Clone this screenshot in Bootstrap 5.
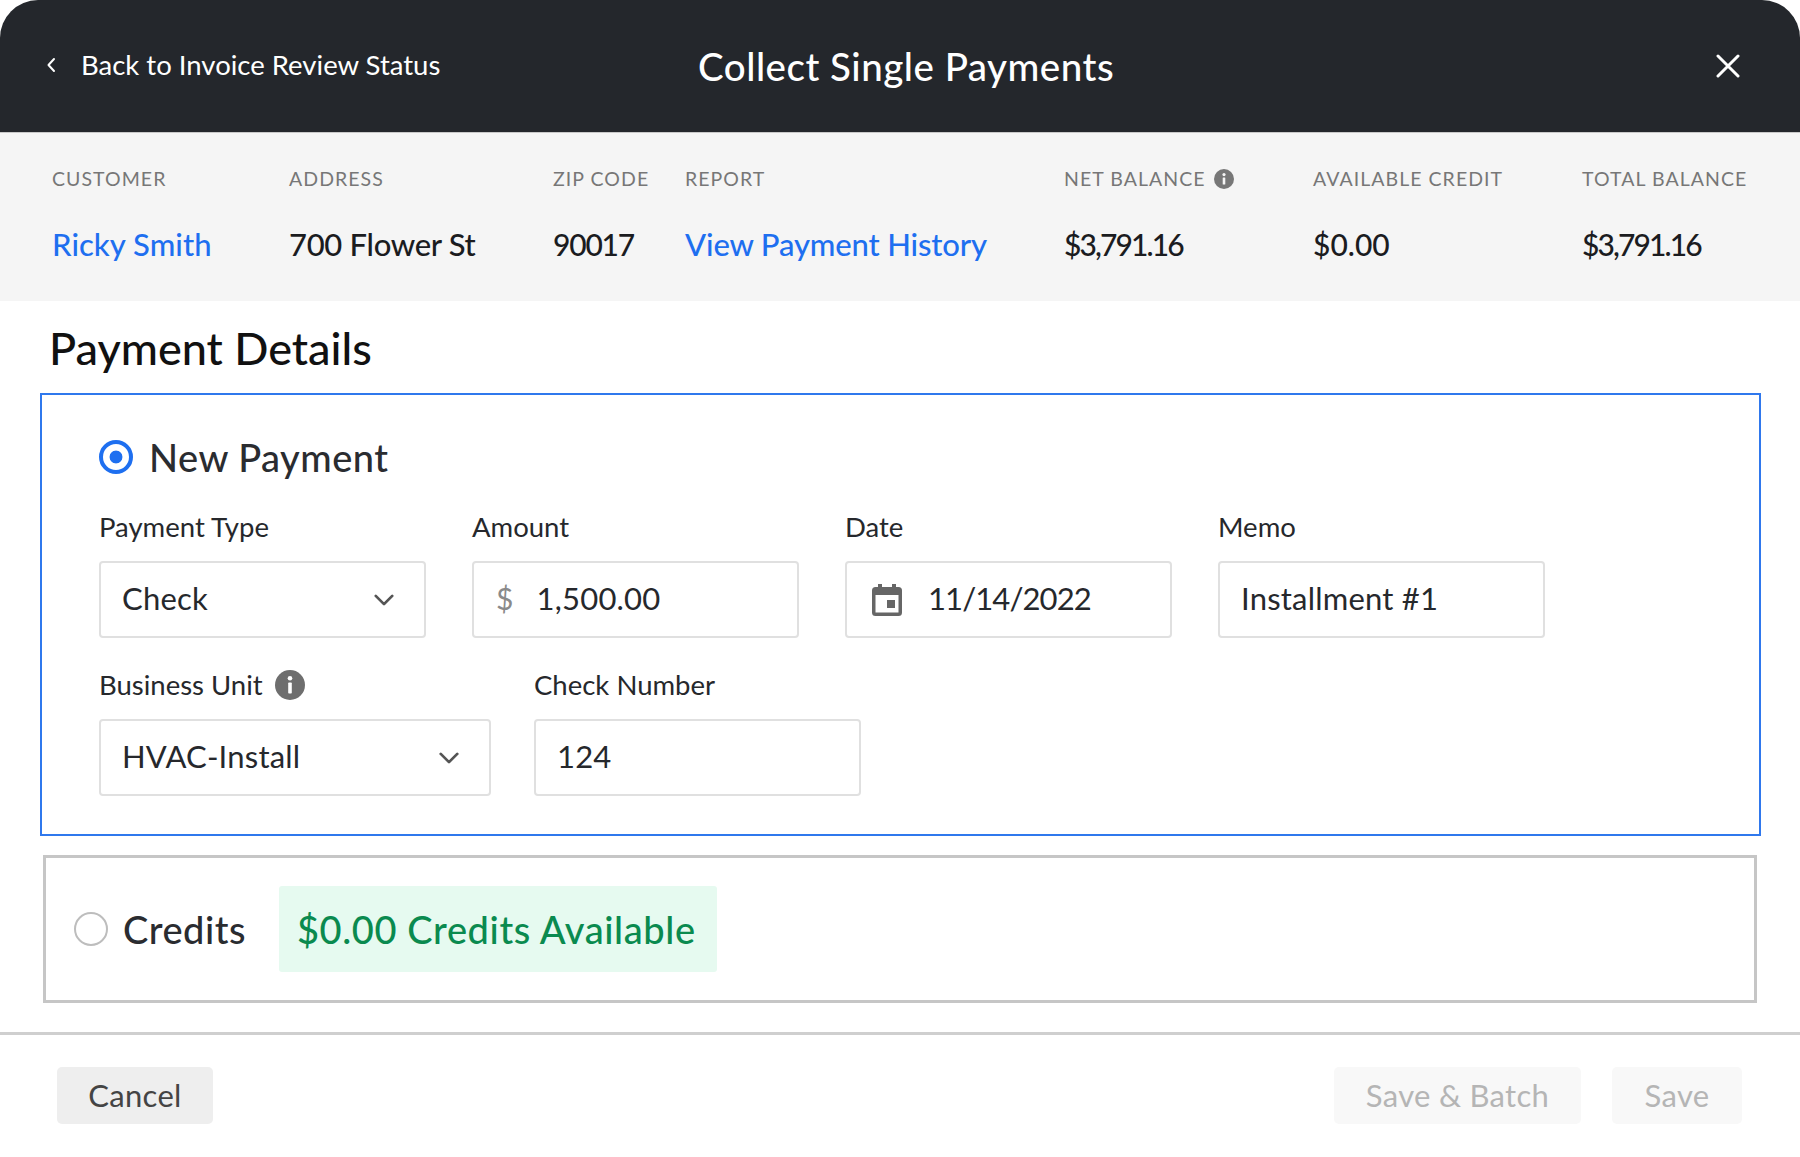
<!DOCTYPE html>
<html lang="en">
<head>
<meta charset="utf-8">
<title>Collect Single Payments</title>
<link href="https://cdn.jsdelivr.net/npm/bootstrap@5.3.0/dist/css/bootstrap.min.css" rel="stylesheet">
<style>
html,body{height:100%;background:#fff;margin:0}
body{font-family:"Lato","Liberation Sans",sans-serif;color:#212328;overflow:hidden}
.shell{width:1800px;height:1157px}
.top-bar{height:133px;background:#24272c;color:#fff;border-radius:38px 38px 0 0;padding:0 60px 0 46px;border-bottom:1px solid #c9c9c9}
.back-link{width:652px;font-size:27.5px;color:#fff;text-decoration:none;margin-top:-2px}
.back-link svg{margin-right:21px}
.top-title{font-size:38.5px;font-weight:500;letter-spacing:.5px;margin:0}
.close-x{background:none;border:0;padding:0;line-height:0}
.info-band{height:168px;background:#f5f5f5;padding:33px 0 0 52px}
.info-col{flex:none}
.c1{width:237px}.c2{width:264px}.c3{width:132px}.c4{width:379px}.c5{width:249px}.c6{width:269px}
.info-label{font-size:19.5px;line-height:26px;color:#777;letter-spacing:1.05px;height:26px}
.info-value{font-size:31px;line-height:40px;margin-top:32px;color:#1b1c1f;font-weight:500;white-space:nowrap;letter-spacing:-.15px}
.info-value a{color:#1e6ff0;text-decoration:none}
.num-money{font-size:30px;letter-spacing:-1.9px}
.num-zip{font-size:30px;letter-spacing:-1.2px}
.num-plain{font-size:30px;letter-spacing:0}
.val-name{letter-spacing:.05px}
.val-addr{letter-spacing:-.3px}
.section-title{font-size:45px;line-height:52px;font-weight:500;color:#111;margin:21px 0 19px 49px}
.new-box{margin:0 39px 0 40px;height:443px;border:2px solid #2f78ed;padding:39px 0 0 57px}
.pay-radio.form-check-input{width:34px;height:34px;margin:0;border:4px solid #1e6ff0;background-color:#fff;background-image:radial-gradient(circle,#1e6ff0 0 6px,transparent 6.8px)}
.pay-radio-off.form-check-input{width:34px;height:34px;margin:0;border:2px solid #bdbdbd;background-color:#fff}
.radio-text{font-size:38px;line-height:46px;font-weight:500;color:#2a2c30;margin:0;letter-spacing:.5px}
.radio-head{margin-bottom:30px}
.field-row{margin-bottom:30px}
.field{width:327px}
.field-wide{width:392px}
.field-gap{gap:46px}
.field-gap2{gap:43px}
.field-label{font-size:27.5px;line-height:34px;margin:0 0 17px;color:#26282c;display:flex;align-items:center;gap:10px;height:34px}
.label-info{margin-left:2px}
.fake-input.form-control,.fake-input.form-select{height:77px;border:2px solid #e0e0e0;border-radius:4px;font-size:31px;line-height:40px;padding:14px 21px 18px;color:#26282c;letter-spacing:.2px;display:flex;align-items:center;gap:25px}
.fake-input.form-select{background-image:url("data:image/svg+xml,%3csvg xmlns='http://www.w3.org/2000/svg' viewBox='0 0 16 16'%3e%3cpath fill='none' stroke='%23555' stroke-linecap='round' stroke-linejoin='round' stroke-width='2' d='m2 5 6 6 6-6'/%3e%3c/svg%3e");background-size:22px 22px;background-position:right 29px center}
.dollar{color:#8a8a8a;font-size:30px;margin:0 -2px 0 1px}
.cal-icon{margin:4px 0 0 3px}
.date-text{letter-spacing:-.9px}
.credit-box{margin:19px 43px 0 43px;height:148px;border:3px solid #c6c6c6;padding:0 0 0 28px;gap:15px}
.credit-tag{background:#e6faf0;color:#0a8a4f;font-size:38px;line-height:46px;font-weight:500;width:438px;height:86px;border-radius:3px;padding:0 0 0 18px;margin-left:18px;letter-spacing:.6px}
.foot-bar{margin-top:29px;border-top:3px solid #cfcfcf;padding:32px 58px 0 57px}
.foot-btn.btn{height:57px;font-size:31px;line-height:40px;padding:0 0 2px;border:0;border-radius:5px;letter-spacing:.3px}
.foot-cancel.btn{width:156px;background:#eee;color:#444}
.foot-muted.btn{background:#f8f8f8;color:#b5b5b5;opacity:1}
.w-batch{width:247px}.w-save{width:130px}
.foot-gap{gap:31px}
</style>
</head>
<body>
<div class="shell d-flex flex-column">
  <header class="top-bar d-flex align-items-center">
    <a class="back-link d-flex align-items-center" href="#">
      <svg width="10" height="16" viewBox="0 0 10 16" fill="none" stroke="#fff" stroke-width="2" stroke-linecap="round" stroke-linejoin="round"><path d="M8 2 2.5 8 8 14"/></svg>
      <span class="ms-1">Back to Invoice Review Status</span>
    </a>
    <h1 class="top-title">Collect Single Payments</h1>
    <button class="close-x ms-auto" type="button" aria-label="Close">
      <svg width="24" height="24" viewBox="0 0 24 24" fill="none" stroke="#fff" stroke-width="3" stroke-linecap="round"><path d="M2 2l20 20M22 2 2 22"/></svg>
    </button>
  </header>

  <section class="info-band d-flex">
    <div class="info-col c1"><div class="info-label">CUSTOMER</div><div class="info-value val-name"><a href="#">Ricky Smith</a></div></div>
    <div class="info-col c2"><div class="info-label">ADDRESS</div><div class="info-value val-addr">700 Flower St</div></div>
    <div class="info-col c3"><div class="info-label">ZIP CODE</div><div class="info-value num-zip">90017</div></div>
    <div class="info-col c4"><div class="info-label">REPORT</div><div class="info-value"><a href="#">View Payment History</a></div></div>
    <div class="info-col c5">
      <div class="info-label d-flex align-items-center gap-2">NET BALANCE
        <svg width="20" height="20" viewBox="0 0 20 20"><circle cx="10" cy="10" r="10" fill="#777"/><rect x="8.7" y="8.5" width="2.6" height="7" rx=".6" fill="#f5f5f5"/><circle cx="10" cy="5.6" r="1.6" fill="#f5f5f5"/></svg>
      </div>
      <div class="info-value num-money">$3,791.16</div>
    </div>
    <div class="info-col c6"><div class="info-label">AVAILABLE CREDIT</div><div class="info-value num-plain">$0.00</div></div>
    <div class="info-col"><div class="info-label">TOTAL BALANCE</div><div class="info-value num-money">$3,791.16</div></div>
  </section>

  <h2 class="section-title">Payment Details</h2>

  <section class="new-box">
    <div class="d-flex align-items-center gap-3 radio-head">
      <input class="form-check-input pay-radio" type="radio" name="mode" checked aria-label="New Payment">
      <p class="radio-text">New Payment</p>
    </div>
    <div class="d-flex field-gap field-row">
      <div class="field">
        <div class="field-label">Payment Type</div>
        <div class="form-select fake-input">Check</div>
      </div>
      <div class="field">
        <div class="field-label">Amount</div>
        <div class="form-control fake-input"><span class="dollar">$</span><span>1,500.00</span></div>
      </div>
      <div class="field">
        <div class="field-label">Date</div>
        <div class="form-control fake-input">
          <svg class="cal-icon" width="32" height="34" viewBox="0 0 32 34"><path fill="#666" d="M7 1h4v3h10V1h4v3h2.500A3.500 3.500 0 0 1 31 7.500V29.500A3.500 3.500 0 0 1 27.500 33H4.500A3.500 3.500 0 0 1 1 29.500V7.500A3.500 3.500 0 0 1 4.500 4H7zM4.500 12v17.500h23V12z"/><rect x="16" y="17" width="8" height="8" fill="#666"/></svg>
          <span class="date-text">11/14/2022</span>
        </div>
      </div>
      <div class="field">
        <div class="field-label">Memo</div>
        <div class="form-control fake-input">Installment #1</div>
      </div>
    </div>
    <div class="d-flex field-gap2">
      <div class="field-wide">
        <div class="field-label">Business Unit
          <svg class="label-info" width="30" height="30" viewBox="0 0 30 30"><circle cx="15" cy="15" r="15" fill="#6e6e6e"/><rect x="13.200" y="12.500" width="3.600" height="11" rx=".8" fill="#fff"/><circle cx="15" cy="8.300" r="2.300" fill="#fff"/></svg>
        </div>
        <div class="form-select fake-input">HVAC-Install</div>
      </div>
      <div class="field">
        <div class="field-label">Check Number</div>
        <div class="form-control fake-input">124</div>
      </div>
    </div>
  </section>

  <section class="credit-box d-flex align-items-center">
    <input class="form-check-input pay-radio-off" type="radio" name="mode" aria-label="Credits">
    <p class="radio-text">Credits</p>
    <div class="credit-tag d-flex align-items-center">$0.00 Credits Available</div>
  </section>

  <footer class="foot-bar d-flex justify-content-between">
    <button class="btn foot-btn foot-cancel" type="button">Cancel</button>
    <div class="d-flex foot-gap">
      <button class="btn foot-btn foot-muted w-batch" type="button" disabled>Save &amp; Batch</button>
      <button class="btn foot-btn foot-muted w-save" type="button" disabled>Save</button>
    </div>
  </footer>
</div>
<script src="https://cdn.jsdelivr.net/npm/bootstrap@5.3.0/dist/js/bootstrap.bundle.min.js"></script>
</body>
</html>
